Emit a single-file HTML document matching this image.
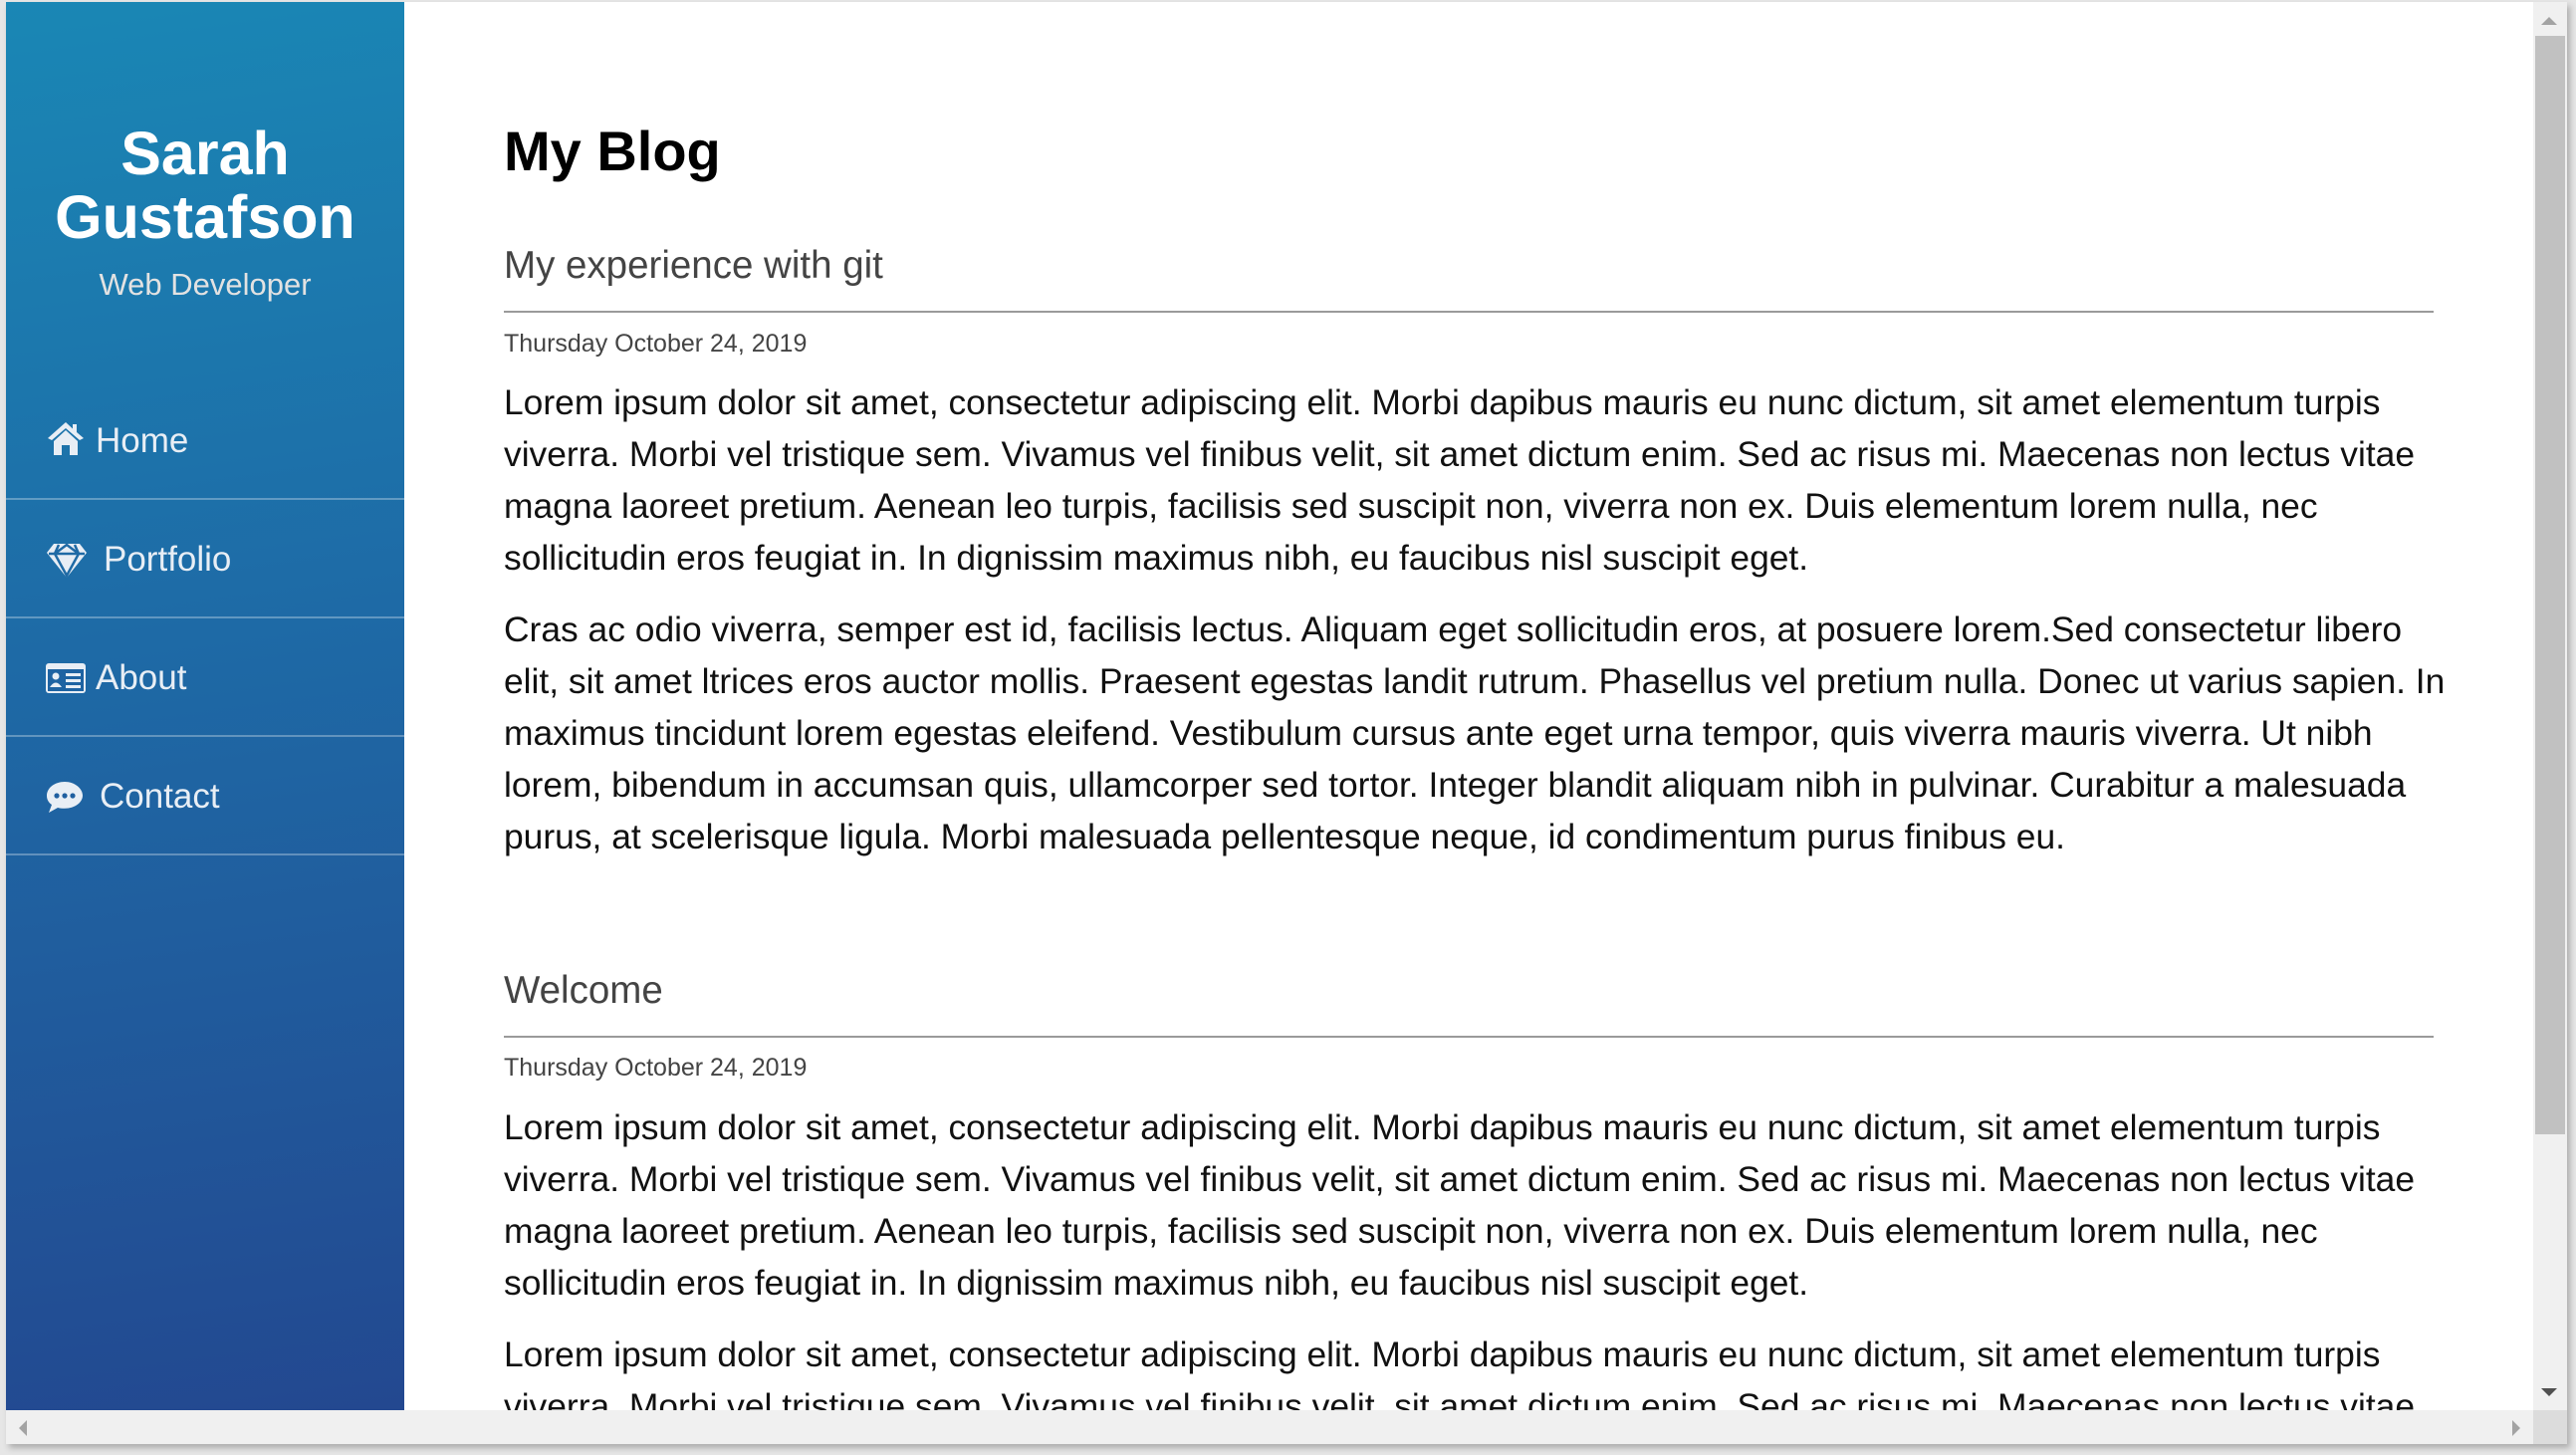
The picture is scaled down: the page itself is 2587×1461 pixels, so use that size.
<!DOCTYPE html>
<html><head><meta charset="utf-8"><style>
*{margin:0;padding:0;box-sizing:border-box}
body{width:2587px;height:1461px;background:#e6e6e6;position:relative;overflow:hidden;font-family:"Liberation Sans",sans-serif}
#win{position:absolute;left:6px;top:2px;width:2572px;height:1448px;background:#fff;box-shadow:3px 4px 6px rgba(0,0,0,.25);overflow:hidden}
#side{position:absolute;left:0;top:0;width:400px;height:1414px;background:linear-gradient(172deg,#1a87b5 0%,#1e6aa6 45%,#234890 100%)}
.nm{position:absolute;left:0;width:400px;text-align:center;color:#fff;font-weight:bold;font-size:61px;line-height:64px}
.sub{position:absolute;left:0;width:400px;text-align:center;color:#e2e2e2;font-size:31px;top:266px}
.nav{position:absolute;left:0;width:400px;height:119px;border-bottom:2px solid rgba(255,255,255,.3);color:#e8eef5;font-size:35px}
.nav span{position:absolute;top:40px}
.nav svg{position:absolute;fill:#e8eef5}
.t{position:absolute;left:500px;white-space:nowrap}
h1{position:absolute;left:500px;top:117px;font-size:56px;font-weight:bold;color:#000}
.h2{font-size:38.5px;color:#444}
.hr{position:absolute;left:500px;width:1938px;height:2px;background:#9a9a9a}
.d{font-size:25px;color:#444}
.p{font-size:35.4px;color:#111;line-height:52px}
</style></head><body>
<div id="win">
<div id="side">
<div class="nm" style="top:120px">Sarah</div>
<div class="nm" style="top:184px">Gustafson</div>
<div class="sub">Web Developer</div>
<div class="nav" style="top:381px"><svg style="left:40px;top:39px" width="40" height="36" viewBox="0 0 40 36"><path d="M20 2 L2 18 L6 20 L20 8 L34 20 L38 18 L31 12 V4 H27 V8.5Z M8 21 V35 H16 V25 H24 V35 H32 V21 L20 10Z"/></svg><span style="left:90px">Home</span></div>
<div class="nav" style="top:500px"><svg style="left:40px;top:43px" width="42" height="36" viewBox="0 0 42 36"><path d="M8 1 H34 L41 10 L21 35 L1 10Z" /><path d="M3 11 H39 M13 2 L9 11 L21 33 L33 11 L29 2 M9 11 L21 2 L33 11" stroke="#1f6aa5" stroke-width="2.5" fill="none"/></svg><span style="left:98px">Portfolio</span></div>
<div class="nav" style="top:619px"><svg style="left:40px;top:45px" width="40" height="30" viewBox="0 0 40 30"><rect x="0" y="0" width="40" height="30" rx="3"/><rect x="2" y="6" width="36" height="22" fill="#1e63a2"/><circle cx="10" cy="13" r="3.5"/><path d="M4 24 q6-9 12 0Z"/><rect x="20" y="10" width="15" height="3"/><rect x="20" y="16" width="15" height="3"/><rect x="20" y="22" width="15" height="3"/></svg><span style="left:90px">About</span></div>
<div class="nav" style="top:738px"><svg style="left:40px;top:44px" width="38" height="33" viewBox="0 0 38 33"><path d="M19 1C9 1 1 7 1 15c0 4 2 7 5 9l-3 8 9-5c2 .6 4 .8 7 .8 10 0 18-6 18-13S29 1 19 1Z"/><circle cx="11" cy="15" r="2.6" fill="#1f5fa0"/><circle cx="19" cy="15" r="2.6" fill="#1f5fa0"/><circle cx="27" cy="15" r="2.6" fill="#1f5fa0"/></svg><span style="left:94px">Contact</span></div>
</div>
<h1>My Blog</h1>
<div class="t h2" style="left:500px;top:243px">My experience with git</div>
<div class="hr" style="top:310px"></div>
<div class="t d" style="top:329px">Thursday October 24, 2019</div>
<div class="t p" style="top:376px">Lorem ipsum dolor sit amet, consectetur adipiscing elit. Morbi dapibus mauris eu nunc dictum, sit amet elementum turpis<br>viverra. Morbi vel tristique sem. Vivamus vel finibus velit, sit amet dictum enim. Sed ac risus mi. Maecenas non lectus vitae<br>magna laoreet pretium. Aenean leo turpis, facilisis sed suscipit non, viverra non ex. Duis elementum lorem nulla, nec<br>sollicitudin eros feugiat in. In dignissim maximus nibh, eu faucibus nisl suscipit eget.</div>
<div class="t p" style="top:604px">Cras ac odio viverra, semper est id, facilisis lectus. Aliquam eget sollicitudin eros, at posuere lorem.Sed consectetur libero<br>elit, sit amet ltrices eros auctor mollis. Praesent egestas landit rutrum. Phasellus vel pretium nulla. Donec ut varius sapien. In<br>maximus tincidunt lorem egestas eleifend. Vestibulum cursus ante eget urna tempor, quis viverra mauris viverra. Ut nibh<br>lorem, bibendum in accumsan quis, ullamcorper sed tortor. Integer blandit aliquam nibh in pulvinar. Curabitur a malesuada<br>purus, at scelerisque ligula. Morbi malesuada pellentesque neque, id condimentum purus finibus eu.</div>
<div class="t h2" style="top:971px">Welcome</div>
<div class="hr" style="top:1038px"></div>
<div class="t d" style="top:1056px">Thursday October 24, 2019</div>
<div class="t p" style="top:1104px">Lorem ipsum dolor sit amet, consectetur adipiscing elit. Morbi dapibus mauris eu nunc dictum, sit amet elementum turpis<br>viverra. Morbi vel tristique sem. Vivamus vel finibus velit, sit amet dictum enim. Sed ac risus mi. Maecenas non lectus vitae<br>magna laoreet pretium. Aenean leo turpis, facilisis sed suscipit non, viverra non ex. Duis elementum lorem nulla, nec<br>sollicitudin eros feugiat in. In dignissim maximus nibh, eu faucibus nisl suscipit eget.</div>
<div class="t p" style="top:1332px">Lorem ipsum dolor sit amet, consectetur adipiscing elit. Morbi dapibus mauris eu nunc dictum, sit amet elementum turpis<br>viverra. Morbi vel tristique sem. Vivamus vel finibus velit, sit amet dictum enim. Sed ac risus mi. Maecenas non lectus vitae</div>
<div style="position:absolute;left:2538px;top:0;width:34px;height:1414px;background:#f0f0f0"></div>
<div style="position:absolute;left:2540px;top:34px;width:30px;height:1103px;background:#c1c1c1"></div>
<div style="position:absolute;left:2546px;top:15px;width:0;height:0;border-left:8px solid transparent;border-right:8px solid transparent;border-bottom:8px solid #a3a3a3"></div>
<div style="position:absolute;left:2546px;top:1392px;width:0;height:0;border-left:8px solid transparent;border-right:8px solid transparent;border-top:8px solid #505050"></div>
<div style="position:absolute;left:0;top:1414px;width:2538px;height:34px;background:#f0f0f0"></div>
<div style="position:absolute;left:2538px;top:1414px;width:34px;height:34px;background:#dcdcdc"></div>
<div style="position:absolute;left:13px;top:1424px;width:0;height:0;border-top:8px solid transparent;border-bottom:8px solid transparent;border-right:8px solid #a3a3a3"></div>
<div style="position:absolute;left:2517px;top:1424px;width:0;height:0;border-top:8px solid transparent;border-bottom:8px solid transparent;border-left:8px solid #a3a3a3"></div>
</div>
</body></html>
